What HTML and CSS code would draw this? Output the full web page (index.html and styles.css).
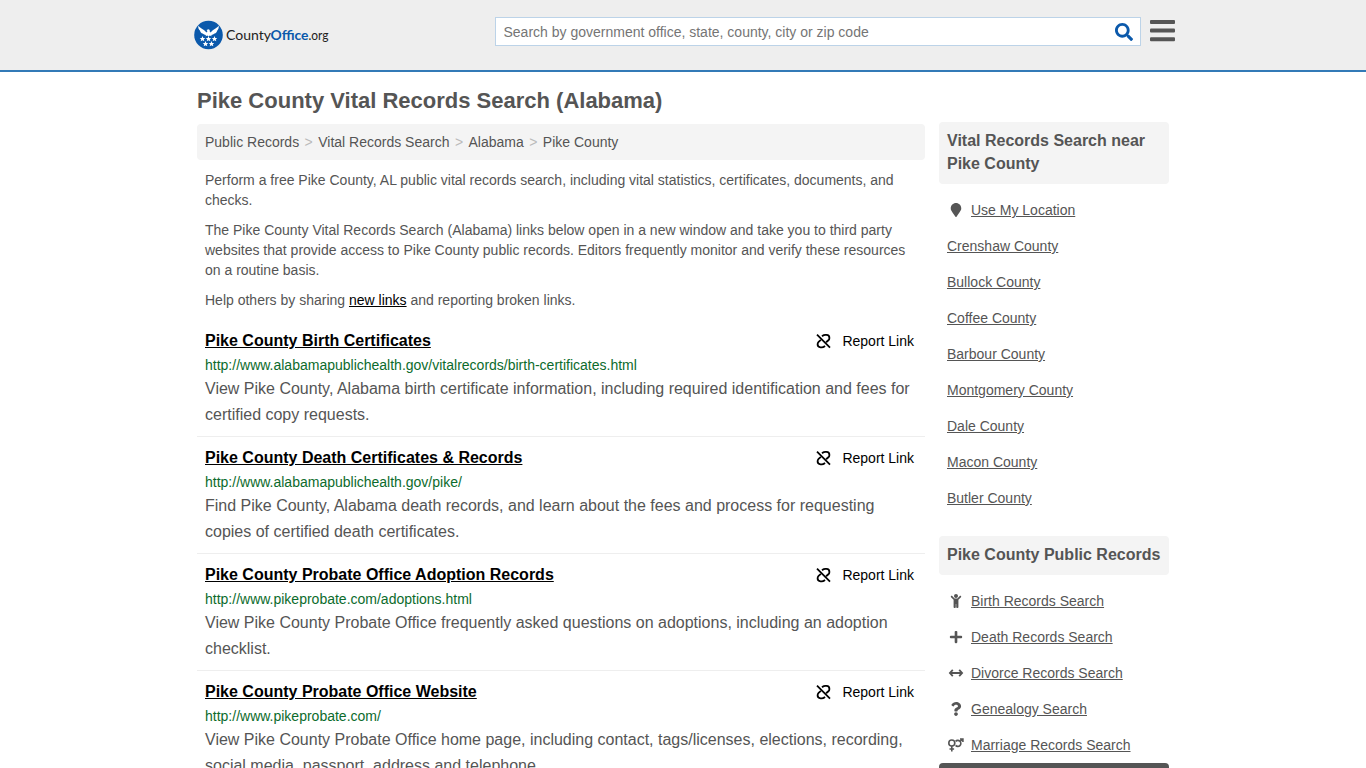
FILE: index.html
```html
<!DOCTYPE html>
<html lang="en">
<head>
    <meta charset="UTF-8">
    <meta name="viewport" content="width=device-width, initial-scale=1.0">
    <title>Pike County Vital Records Search (Alabama)</title>
    <link rel="stylesheet" href="styles.css">
</head>
<body>
    <header class="site-header">
        <div class="header-inner">
            <a href="#" class="logo">
                <svg width="136" height="30" viewBox="0 0 136 30">
                    <circle cx="14.5" cy="15" r="14.3" fill="#0b59ab"/>
                    <!-- eagle -->
                    <path fill="#fff" d="M4.300 5.500c1.500 2.500 5.500 3.500 8 7l1.200-1.300-.9-1.100 1.900-.9 1.300.8-.2 1.200 1.100 1.300c2.500-3.500 6.500-4.500 8-7 .3 2.400-.3 3.800-1.400 4.900-.4 1.600-1.400 2.700-2.700 3.200-1.200 1-2.300 1.400-3.500 1.300l.7 1.300-2.100-.6-1.100.9-1.100-.9-2.100.6.7-1.300c-1.200.1-2.300-.3-3.500-1.300-1.300-.5-2.300-1.600-2.700-3.200C4.600 9.300 4 7.900 4.300 5.500z"/>
                    <!-- stars -->
                    <g fill="#fff">
                        <path id="star" d="M8.500 16l.8 1.900 2 .1-1.500 1.300.5 2-1.800-1.100-1.800 1.100.5-2L5.700 18l2-.1z"/>
                        <use href="#star" x="6"/>
                        <use href="#star" x="12"/>
                        <use href="#star" x="3" y="5"/>
                        <use href="#star" x="9" y="5"/>
                    </g>
                    <text class="logo-text" y="20">
                        <tspan x="32" textLength="45" lengthAdjust="spacingAndGlyphs">County</tspan><tspan class="logo-bold" x="76.500" textLength="38" lengthAdjust="spacingAndGlyphs">Office</tspan><tspan class="logo-org" x="114.500" textLength="20" lengthAdjust="spacingAndGlyphs">.org</tspan>
                    </text>
                </svg>
            </a>
            <form class="search">
                <input type="text" placeholder="Search by government office, state, county, city or zip code">
                <svg class="search-icon" viewBox="0 0 512 512"><path d="M505 442.700L405.300 343c-4.500-4.500-10.600-7-17-7H372c27.600-35.300 44-79.700 44-128C416 93.100 322.900 0 208 0S0 93.100 0 208s93.100 208 208 208c48.300 0 92.700-16.400 128-44v16.300c0 6.400 2.500 12.500 7 17l99.700 99.700c9.400 9.400 24.600 9.400 33.900 0l28.300-28.300c9.400-9.400 9.400-24.600.1-34zM208 336c-70.700 0-128-57.200-128-128 0-70.700 57.200-128 128-128 70.700 0 128 57.200 128 128 0 70.700-57.200 128-128 128z"/></svg>
            </form>
            <svg class="menu-icon" width="25" height="22" viewBox="0 0 25 22">
                <rect width="25" height="4" rx="1"/>
                <rect y="8.600" width="25" height="4" rx="1"/>
                <rect y="17.200" width="25" height="4" rx="1"/>
            </svg>
        </div>
    </header>

    <svg class="hidden">
        <symbol id="unlink" viewBox="0 0 16 16">
            <g fill="none" stroke="#000" stroke-width="1.800">
                <path d="M2 1.600l13 13"/>
                <path d="M7 3.300l.7-.6C8.500 2 9.300 1.900 10.300 1.900h1.200a3 3 0 0 1 2.900 3c0 1-.3 1.700-1 2.400l-2.300 2"/>
                <path d="M10 12.900l-.7.600c-.8.700-1.600.8-2.600.8H5.500a3 3 0 0 1-2.900-3c0-1 .3-1.700 1-2.400l2.300-2"/>
            </g>
        </symbol>
    </svg>

    <div class="container">
        <main class="content">
            <h1>Pike County Vital Records Search (Alabama)</h1>
            <nav class="breadcrumb">
                <a href="#">Public Records</a><span>&gt;</span><a href="#">Vital Records Search</a><span>&gt;</span><a href="#">Alabama</a><span>&gt;</span><a href="#">Pike County</a>
            </nav>
            <div class="intro">
                <p>Perform a free Pike County, AL public vital records search, including vital statistics, certificates, documents, and checks.</p>
                <p>The Pike County Vital Records Search (Alabama) links below open in a new window and take you to third party websites that provide access to Pike County public records. Editors frequently monitor and verify these resources on a routine basis.</p>
                <p>Help others by sharing <a href="#">new links</a> and reporting broken links.</p>
            </div>

            <div class="result">
                <div class="result-top">
                    <a href="#" class="result-title">Pike County Birth Certificates</a>
                    <a href="#" class="report"><svg><use href="#unlink"/></svg>Report Link</a>
                </div>
                <div class="result-url">http://www.alabamapublichealth.gov/vitalrecords/birth-certificates.html</div>
                <div class="result-text">View Pike County, Alabama birth certificate information, including required identification and fees for certified copy requests.</div>
            </div>
            <div class="result">
                <div class="result-top">
                    <a href="#" class="result-title">Pike County Death Certificates &amp; Records</a>
                    <a href="#" class="report"><svg><use href="#unlink"/></svg>Report Link</a>
                </div>
                <div class="result-url">http://www.alabamapublichealth.gov/pike/</div>
                <div class="result-text">Find Pike County, Alabama death records, and learn about the fees and process for requesting copies of certified death certificates.</div>
            </div>
            <div class="result">
                <div class="result-top">
                    <a href="#" class="result-title">Pike County Probate Office Adoption Records</a>
                    <a href="#" class="report"><svg><use href="#unlink"/></svg>Report Link</a>
                </div>
                <div class="result-url">http://www.pikeprobate.com/adoptions.html</div>
                <div class="result-text">View Pike County Probate Office frequently asked questions on adoptions, including an adoption checklist.</div>
            </div>
            <div class="result">
                <div class="result-top">
                    <a href="#" class="result-title">Pike County Probate Office Website</a>
                    <a href="#" class="report"><svg><use href="#unlink"/></svg>Report Link</a>
                </div>
                <div class="result-url">http://www.pikeprobate.com/</div>
                <div class="result-text">View Pike County Probate Office home page, including contact, tags/licenses, elections, recording, social media, passport, address and telephone.</div>
            </div>
        </main>

        <aside class="sidebar">
            <h2>Vital Records Search near Pike County</h2>
            <ul class="side-list">
                <li><svg viewBox="0 0 384 512"><path d="M172.268 501.670C26.970 291.031 0 269.413 0 192 0 85.961 85.961 0 192 0s192 85.961 192 192c0 77.413-26.970 99.031-172.268 309.670-9.535 13.774-29.930 13.773-39.464 0z"/></svg><a href="#">Use My Location</a></li>
                <li><a href="#">Crenshaw County</a></li>
                <li><a href="#">Bullock County</a></li>
                <li><a href="#">Coffee County</a></li>
                <li><a href="#">Barbour County</a></li>
                <li><a href="#">Montgomery County</a></li>
                <li><a href="#">Dale County</a></li>
                <li><a href="#">Macon County</a></li>
                <li><a href="#">Butler County</a></li>
            </ul>

            <h2 class="second">Pike County Public Records</h2>
            <ul class="side-list">
                <li><svg viewBox="0 0 384 512"><path d="M120 72c0-39.765 32.235-72 72-72s72 32.235 72 72c0 39.764-32.235 72-72 72s-72-32.236-72-72zm254.627 1.373c-12.496-12.497-32.758-12.497-45.254 0L242.745 160H141.254L54.627 73.373c-12.496-12.497-32.758-12.497-45.254 0-12.497 12.497-12.497 32.758 0 45.255L104 213.254V480c0 17.673 14.327 32 32 32h16c17.673 0 32-14.327 32-32V368h16v112c0 17.673 14.327 32 32 32h16c17.673 0 32-14.327 32-32V213.254l94.627-94.627c12.497-12.496 12.497-32.757 0-45.254z"/></svg><a href="#">Birth Records Search</a></li>
                <li><svg viewBox="0 0 448 512"><path d="M416 208H272V64c0-17.670-14.330-32-32-32h-32c-17.670 0-32 14.330-32 32v144H32c-17.670 0-32 14.330-32 32v32c0 17.670 14.330 32 32 32h144v144c0 17.670 14.330 32 32 32h32c17.670 0 32-14.330 32-32V304h144c17.670 0 32-14.330 32-32v-32c0-17.670-14.330-32-32-32z"/></svg><a href="#">Death Records Search</a></li>
                <li><svg class="line-icon" viewBox="0 0 18 14"><path stroke-width="1.800" d="M3 7h12M5.800 3.800L2.900 7l2.900 3.200M12.200 3.800L15.100 7l-2.900 3.200"/></svg><a href="#">Divorce Records Search</a></li>
                <li><svg viewBox="0 0 384 512"><path d="M202.021 0C122.202 0 70.503 32.703 29.914 91.026c-7.363 10.580-5.093 25.086 5.178 32.874l43.138 32.709c10.373 7.865 25.132 6.026 33.253-4.148 25.049-31.381 43.630-49.449 82.757-49.449 30.764 0 68.816 19.799 68.816 49.631 0 22.552-18.617 34.134-48.993 51.164-35.423 19.860-82.299 44.576-82.299 106.405V320c0 13.255 10.745 24 24 24h72.471c13.255 0 24-10.745 24-24v-5.773c0-42.860 125.268-44.645 125.268-160.627C377.504 66.256 286.902 0 202.021 0zM192 373.459c-38.196 0-69.271 31.075-69.271 69.271 0 38.195 31.075 69.270 69.271 69.270s69.271-31.075 69.271-69.271-31.075-69.270-69.271-69.270z"/></svg><a href="#">Genealogy Search</a></li>
                <li><svg class="line-icon" viewBox="0 0 18 14"><g stroke-width="1.600"><circle cx="4.800" cy="5" r="3"/><path d="M4.800 8v5.500M2.500 11h4.600M12.800 3.700L15.600 1.200M13 1h2.900v2.900"/><path d="M8.600 3.400a3 3 0 1 1 0 4"/></g></svg><a href="#">Marriage Records Search</a></li>
            </ul>
            <div class="side-bar-dark"></div>
        </aside>
    </div>
</body>
</html>
```
FILE: styles.css
```css
* {
    box-sizing: border-box;
}

body {
    margin: 0;
    height: 768px;
    overflow: hidden;
    background: #fff;
    color: #555;
    font-family: "Liberation Sans", Arial, sans-serif;
    font-size: 14px;
    line-height: 20px;
}

a {
    color: inherit;
}

.hidden {
    display: none;
}

/* Header */
.site-header {
    height: 72px;
    background: #eee;
    border-bottom: 2px solid #337ab7;
}

.header-inner {
    display: flex;
    align-items: flex-start;
    width: 981px;
    margin-left: 194px;
    padding-top: 17px;
}

.logo {
    width: 136px;
    height: 30px;
    margin-top: 3px;
}

.logo svg {
    display: block;
}

.logo-text {
    font-family: Lato, sans-serif;
    font-size: 13.5px;
    fill: #222;
}

.logo-bold {
    font-weight: bold;
    fill: #0b59ab;
}

.logo-org {
    font-weight: normal;
}

.search {
    display: flex;
    align-items: center;
    width: 646px;
    height: 29px;
    margin-left: auto;
    padding: 0 7px;
    background: #fff;
    border: 1px solid #bcd3e8;
}

.search input {
    flex: 1;
    padding: 0 0 0 0.5px;
    border: none;
    outline: none;
    font: 14px "Liberation Sans", Arial, sans-serif;
}

.search input::placeholder {
    color: #757575;
}

.search-icon {
    width: 18px;
    height: 18px;
    fill: #0b59ab;
}

.menu-icon {
    margin: 3px 0 0 9px;
    fill: #555;
}

/* Layout */
.container {
    display: flex;
    justify-content: space-between;
    width: 972px;
    margin-left: 197px;
}

.content {
    width: 728px;
}

h1 {
    margin: 0;
    padding: 17px 0 11px;
    font-size: 22px;
    line-height: 24px;
}

.breadcrumb {
    height: 36px;
    padding: 8px;
    background: #f4f4f4;
    border-radius: 4px;
}

.breadcrumb a {
    text-decoration: none;
}

.breadcrumb span {
    padding: 0 5.45px;
    color: #bbb;
}

.intro {
    padding: 0 8px 10px;
}

.intro p {
    margin: 10px 0 0;
}

.intro a {
    color: #000;
}

/* Results */
.result {
    padding: 9px 8px 8px;
    border-bottom: 1px solid #eee;
}

.result-top {
    display: flex;
    justify-content: space-between;
    height: 26px;
    padding-right: 3px;
    line-height: 24px;
}

.result-title {
    color: #000;
    font-size: 16px;
    font-weight: bold;
}

.report {
    display: flex;
    align-items: center;
    height: 24px;
    color: #000;
    text-decoration: none;
}

.report svg {
    width: 16px;
    height: 16px;
    margin-right: 11px;
}

.result-url {
    margin-bottom: 1px;
    color: #0c6b2c;
}

.result-text {
    font-size: 16px;
    line-height: 26px;
}

/* Sidebar */
.sidebar {
    width: 230px;
    padding-top: 50px;
}

.sidebar h2 {
    margin: 0 0 8px;
    padding: 7px 8px 9px;
    background: #f4f4f4;
    border-radius: 4px;
    font-size: 16px;
    line-height: 23px;
}

.sidebar .second {
    margin-top: 20px;
}

.side-list {
    margin: 0;
    padding: 0 8px;
    list-style: none;
}

.side-list li {
    display: flex;
    align-items: center;
    height: 36px;
}

.side-list svg {
    width: 18px;
    height: 14px;
    margin-right: 6px;
    fill: #555;
}

.side-list .line-icon {
    fill: none;
    stroke: #555;
}

.side-bar-dark {
    height: 40px;
    background: #555;
    border-radius: 4px;
}
```
